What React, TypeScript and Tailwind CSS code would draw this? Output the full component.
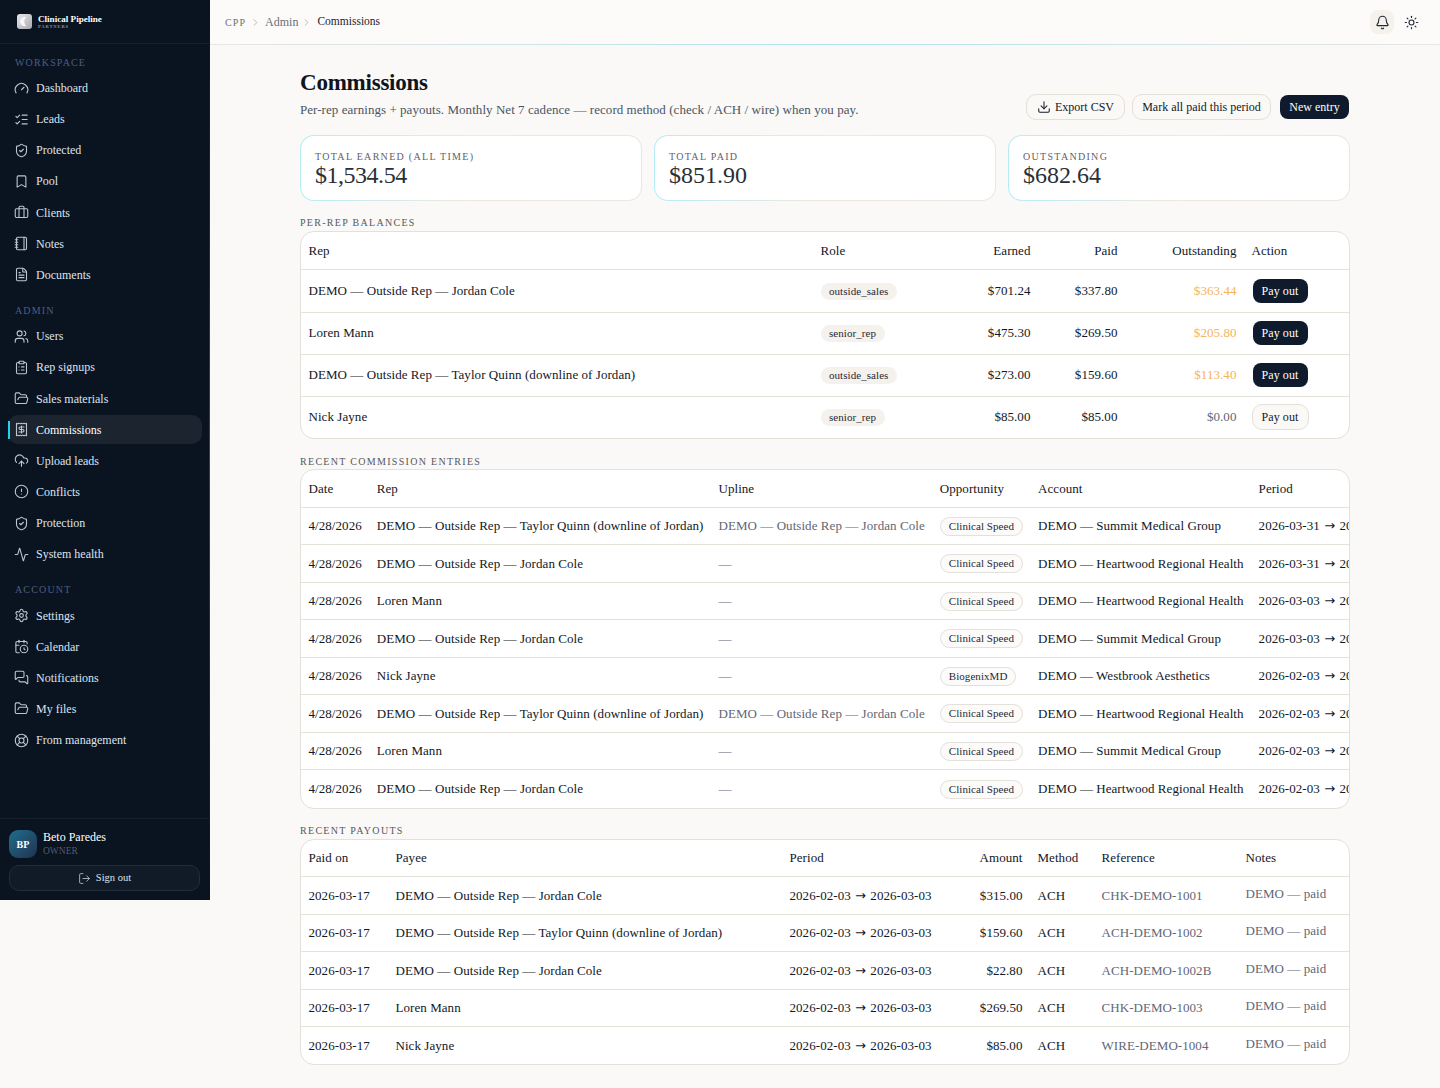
import type { ReactNode } from 'react'
import {
  Activity, Bell, Bookmark, Briefcase, CalendarClock, ChevronRight, CircleAlert, ClipboardList, CloudUpload,
  Download, FileText, FolderOpen, Gauge, LifeBuoy, ListChecks, LogOut, MessagesSquare, Notebook, Receipt,
  Settings, ShieldCheck, Sun, Users,
} from 'lucide-react'
import type { LucideIcon } from 'lucide-react'

type NavItem = { label: string; icon: LucideIcon; active?: boolean }

const workspace: NavItem[] = [
  { label: 'Dashboard', icon: Gauge },
  { label: 'Leads', icon: ListChecks },
  { label: 'Protected', icon: ShieldCheck },
  { label: 'Pool', icon: Bookmark },
  { label: 'Clients', icon: Briefcase },
  { label: 'Notes', icon: Notebook },
  { label: 'Documents', icon: FileText },
]
const admin: NavItem[] = [
  { label: 'Users', icon: Users },
  { label: 'Rep signups', icon: ClipboardList },
  { label: 'Sales materials', icon: FolderOpen },
  { label: 'Commissions', icon: Receipt, active: true },
  { label: 'Upload leads', icon: CloudUpload },
  { label: 'Conflicts', icon: CircleAlert },
  { label: 'Protection', icon: ShieldCheck },
  { label: 'System health', icon: Activity },
]
const account: NavItem[] = [
  { label: 'Settings', icon: Settings },
  { label: 'Calendar', icon: CalendarClock },
  { label: 'Notifications', icon: MessagesSquare },
  { label: 'My files', icon: FolderOpen },
  { label: 'From management', icon: LifeBuoy },
]

const jordan = 'DEMO — Outside Rep — Jordan Cole'
const taylor = 'DEMO — Outside Rep — Taylor Quinn (downline of Jordan)'

const balances = [
  { rep: jordan, role: 'outside_sales', earned: '$701.24', paid: '$337.80', out: '$363.44', due: true },
  { rep: 'Loren Mann', role: 'senior_rep', earned: '$475.30', paid: '$269.50', out: '$205.80', due: true },
  { rep: taylor, role: 'outside_sales', earned: '$273.00', paid: '$159.60', out: '$113.40', due: true },
  { rep: 'Nick Jayne', role: 'senior_rep', earned: '$85.00', paid: '$85.00', out: '$0.00', due: false },
]

const summit = 'DEMO — Summit Medical Group'
const heartwood = 'DEMO — Heartwood Regional Health'
const entries = [
  { rep: taylor, upline: jordan, opp: 'Clinical Speed', account: summit, from: '2026-03-31', to: '2026-04-30' },
  { rep: jordan, upline: '—', opp: 'Clinical Speed', account: heartwood, from: '2026-03-31', to: '2026-04-30' },
  { rep: 'Loren Mann', upline: '—', opp: 'Clinical Speed', account: heartwood, from: '2026-03-03', to: '2026-03-31' },
  { rep: jordan, upline: '—', opp: 'Clinical Speed', account: summit, from: '2026-03-03', to: '2026-03-31' },
  { rep: 'Nick Jayne', upline: '—', opp: 'BiogenixMD', account: 'DEMO — Westbrook Aesthetics', from: '2026-02-03', to: '2026-03-03' },
  { rep: taylor, upline: jordan, opp: 'Clinical Speed', account: heartwood, from: '2026-02-03', to: '2026-03-03' },
  { rep: 'Loren Mann', upline: '—', opp: 'Clinical Speed', account: summit, from: '2026-02-03', to: '2026-03-03' },
  { rep: jordan, upline: '—', opp: 'Clinical Speed', account: heartwood, from: '2026-02-03', to: '2026-03-03' },
]

const payouts = [
  { payee: jordan, amount: '$315.00', ref: 'CHK-DEMO-1001' },
  { payee: taylor, amount: '$159.60', ref: 'ACH-DEMO-1002' },
  { payee: jordan, amount: '$22.80', ref: 'ACH-DEMO-1002B' },
  { payee: 'Loren Mann', amount: '$269.50', ref: 'CHK-DEMO-1003' },
  { payee: 'Nick Jayne', amount: '$85.00', ref: 'WIRE-DEMO-1004' },
]

function NavGroup({ title, items }: { title: string; items: NavItem[] }) {
  return (
    <div className="mb-[12.35px]">
      <div className="px-[15px] mb-[2px] h-[18px] leading-[18px] text-[10px] tracking-[1.15px] text-[#4a5f80]">{title}</div>
      {items.map(item => {
        const Icon = item.icon
        return (
          <div
            key={item.label}
            className={`relative flex items-center gap-[7px] h-[29px] mb-[2.15px] ml-[8px] mr-[8px] pl-[6px] rounded-[10px] text-[12px] ${
              item.active ? 'bg-[#1c2430] text-white' : 'text-[#dbe4f0]'
            }`}
          >
            {item.active && <span className="absolute left-0 top-[6px] bottom-[5px] w-[2px] bg-[#22d3ee]" />}
            <Icon className="w-[15px] h-[15px] shrink-0 text-[#bcc6d2]" strokeWidth={1.75} />
            <span>{item.label}</span>
          </div>
        )
      })}
    </div>
  )
}

function Sidebar() {
  return (
    <aside className="relative w-[210px] h-[900px] shrink-0 flex flex-col bg-[#0a1320]">
      <span className="absolute right-0 inset-y-0 w-px bg-gradient-to-b from-[#0a1320] via-[#0f5266] to-[#0a1320]" />
      <div className="h-[44px] shrink-0 flex items-center gap-[6px] pl-[17px] border-b border-[#161f2c]">
        <div className="w-[15px] h-[15px] rounded-[3px] bg-gradient-to-br from-[#e9e9eb] to-[#a9abb0] flex items-center justify-center">
          <svg viewBox="0 0 15 15" className="w-[15px] h-[15px]">
            <path d="M9.2 3.2a4.6 4.6 0 1 0 0 8.6 5.6 5.6 0 0 1 0-8.6z" fill="#f7f7f8" />
          </svg>
        </div>
        <div className="-mt-[1px]">
          <div className="text-[9.1px] leading-[10px] font-bold text-white">Clinical Pipeline</div>
          <div className="text-[4.5px] leading-[5px] tracking-[0.2em] font-bold text-[#8b95a5]">PARTNERS</div>
        </div>
      </div>
      <nav className="flex-1 pt-[9.55px]">
        <NavGroup title="WORKSPACE" items={workspace} />
        <NavGroup title="ADMIN" items={admin} />
        <NavGroup title="ACCOUNT" items={account} />
      </nav>
      <div className="h-[82px] shrink-0 border-t border-[#161f2c] px-[9px] pt-[11px]">
        <div className="flex items-center gap-[6px] h-[28px]">
          <div className="w-[28px] h-[28px] rounded-[9px] bg-gradient-to-br from-[#1c6f8c] to-[#1e3350] flex items-center justify-center text-[10px] font-bold text-white">
            BP
          </div>
          <div>
            <div className="text-[12px] leading-[15px] text-white">Beto Paredes</div>
            <div className="text-[9.5px] leading-[13px] text-[#4f5c70]">OWNER</div>
          </div>
        </div>
        <div className="mt-[7px] h-[26px] w-[191px] rounded-[10px] border border-[#232c3a] bg-[#111a27] flex items-center justify-center gap-[5px] text-[10.5px] text-[#dbe4f0]">
          <LogOut className="w-[13px] h-[13px] text-[#a8b2c0]" strokeWidth={1.75} />
          Sign out
        </div>
      </div>
    </aside>
  )
}

function TopBar() {
  return (
    <header className="bg-[#fcfbf9]">
      <div className="h-[44px] flex items-center justify-between pl-[15px] pr-[17px]">
        <div className="flex items-center text-[12px]">
          <span className="text-[10px] tracking-[1.1px] text-[#6d6f75]">CPP</span>
          <ChevronRight className="w-[11px] h-[11px] mx-[4px] text-[#b5b5b5]" />
          <span className="text-[#6d6f75]">Admin</span>
          <ChevronRight className="w-[11px] h-[11px] mx-[3px] text-[#b5b5b5]" />
          <span className="ml-[2px] text-[11.5px] text-[#1d2430]">Commissions</span>
        </div>
        <div className="flex items-center gap-[5px]">
          <div className="w-[24px] h-[24px] rounded-[8px] bg-[#f5f1eb] flex items-center justify-center">
            <Bell className="w-[15px] h-[15px] text-[#1f2937]" strokeWidth={1.75} />
          </div>
          <div className="w-[24px] h-[24px] flex items-center justify-center">
            <Sun className="w-[15px] h-[15px] text-[#1f2937]" strokeWidth={1.75} />
          </div>
        </div>
      </div>
      <div className="h-px bg-gradient-to-r from-[#e8e6e1] via-[#aee4ee] to-[#e8e6e1]" />
    </header>
  )
}

function StatCard({ label, value, tight }: { label: string; value: string; tight?: boolean }) {
  return (
    <div className="h-[66px] rounded-[14px] p-px bg-gradient-to-r from-[#b5ecf5] via-[#f0e8dc] to-[#e7e7e7]">
      <div className="h-full rounded-[13px] bg-white px-[14px] pt-[15px]">
        <div className="text-[10px] leading-[12px] tracking-[1.3px] text-[#5f6268]">{label}</div>
        <div className={`text-[24px] leading-[24px] text-[#2b2f36] ${tight ? 'tracking-[-0.02em]' : ''}`}>{value}</div>
      </div>
    </div>
  )
}

function SectionLabel({ children }: { children: ReactNode }) {
  return <div className="h-[14px] leading-[14px] text-[10px] tracking-[1.3px] text-[#55585e]">{children}</div>
}

function TableCard({ children }: { children: ReactNode }) {
  return <div className="rounded-[14px] border border-[#e4e0da] bg-white overflow-hidden">{children}</div>
}

function Th({ children, right }: { children: ReactNode; right?: boolean }) {
  return <th className={`px-[7.5px] h-[37px] font-normal ${right ? 'text-right' : 'text-left'}`}>{children}</th>
}

function Pill({ children }: { children: ReactNode }) {
  return <span className="inline-block h-[17px] leading-[17px] px-[8.5px] rounded-full bg-[#f5f2ed] text-[11px] text-[#1f2937]">{children}</span>
}

function OutlinePill({ children }: { children: ReactNode }) {
  return (
    <span className="inline-block h-[19px] leading-[17px] px-[8px] rounded-full border border-[#e4e0da] bg-[#fcfbf9] text-[11px] text-[#1f2937]">
      {children}
    </span>
  )
}

function Period({ from, to }: { from: string; to: string }) {
  return (
    <>
      {from} <span className="mx-[1px] font-['DejaVu_Sans',sans-serif]">→</span> {to}
    </>
  )
}

export default function App() {
  return (
    <div className="min-h-[1088px] flex items-start bg-[#faf9f7] font-['Liberation_Serif',serif] text-[#111827]">
      <Sidebar />
      <div className="flex-1 min-w-0">
        <TopBar />
        <main className="w-[1050px] ml-[90px] pt-[25px]">
          <h1 className="text-[23px] leading-[26px] tracking-[-0.01em] font-bold text-[#0f1420]">Commissions</h1>
          <div className="flex items-end justify-between mt-[5px] mb-[15px]">
            <p className="text-[13px] leading-[18px] pb-[1px] tracking-[0.05px] text-[#4b5563]">
              Per-rep earnings + payouts. Monthly Net 7 cadence — record method (check / ACH / wire) when you pay.
            </p>
            <div className="flex items-center text-[12px] -mt-[10px] mr-[1px]">
              <button className="h-[26px] w-[99px] justify-center rounded-[10px] border border-[#e4dfd8] bg-[#fbf9f6] flex items-center gap-[4px]">
                <Download className="w-[14px] h-[14px]" strokeWidth={1.75} />
                Export CSV
              </button>
              <button className="ml-[7px] h-[26px] w-[139px] rounded-[10px] border border-[#e4dfd8] bg-[#fbf9f6]">Mark all paid this period</button>
              <button className="ml-[9px] h-[24px] w-[69px] rounded-[8px] bg-[#0f1b2d] text-white">New entry</button>
            </div>
          </div>

          <div className="grid grid-cols-3 gap-[12px] mb-[15px]">
            <StatCard label="TOTAL EARNED (ALL TIME)" value="$1,534.54" tight />
            <StatCard label="TOTAL PAID" value="$851.90" />
            <StatCard label="OUTSTANDING" value="$682.64" />
          </div>

          <div className="mb-[1px]">
            <SectionLabel>PER-REP BALANCES</SectionLabel>
          </div>
          <TableCard>
            <table className="w-full border-collapse text-[13px] tracking-[0.06px] whitespace-nowrap">
              <thead>
                <tr className="border-b border-[#e4e0da]">
                  <Th>Rep</Th>
                  <Th>Role</Th>
                  <Th right>Earned</Th>
                  <Th right>Paid</Th>
                  <Th right>Outstanding</Th>
                  <Th>Action</Th>
                </tr>
              </thead>
              <tbody>
                {balances.map((b, i) => (
                  <tr key={i} className={`${i === 0 ? 'h-[43px]' : i === 3 ? 'h-[41.5px]' : 'h-[42px]'} ${i < balances.length - 1 ? 'border-b border-[#e4e0da]' : ''}`}>
                    <td className="px-[7.5px] w-[512px]">{b.rep}</td>
                    <td className="px-[7.5px] w-[120px]"><Pill>{b.role}</Pill></td>
                    <td className="px-[7.5px] text-right">{b.earned}</td>
                    <td className="px-[7.5px] text-right w-[87px]">{b.paid}</td>
                    <td className={`px-[7.5px] text-right w-[119px] ${b.due ? 'text-[#f5b25c]' : 'text-[#5f6775]'}`}>{b.out}</td>
                    <td className="px-[7.5px] w-[105px] text-[12px]">
                      {b.due ? (
                        <button className="block ml-[1px] h-[24px] w-[55px] rounded-[8px] bg-[#0f1b2d] text-white">Pay out</button>
                      ) : (
                        <button className="block h-[26px] w-[57px] rounded-[10px] border border-[#e4dfd8] bg-[#fbf9f6]">Pay out</button>
                      )}
                    </td>
                  </tr>
                ))}
              </tbody>
            </table>
          </TableCard>

          <div className="mt-[16px] mb-[0.5px]">
            <SectionLabel>RECENT COMMISSION ENTRIES</SectionLabel>
          </div>
          <TableCard>
            <table className="border-collapse text-[13px] tracking-[0.06px] whitespace-nowrap">
              <thead>
                <tr className="border-b border-[#e4e0da]">
                  <Th>Date</Th>
                  <Th>Rep</Th>
                  <Th>Upline</Th>
                  <Th>Opportunity</Th>
                  <Th>Account</Th>
                  <Th>Period</Th>
                </tr>
              </thead>
              <tbody>
                {entries.map((e, i) => (
                  <tr key={i} className={`${i === entries.length - 1 ? 'h-[38px]' : 'h-[37.5px] border-b border-[#e4e0da]'}`}>
                    <td className="px-[7.5px]">4/28/2026</td>
                    <td className="px-[7.5px]">{e.rep}</td>
                    <td className="px-[7.5px] text-[#5f6775]">{e.upline}</td>
                    <td className="px-[7.5px]"><OutlinePill>{e.opp}</OutlinePill></td>
                    <td className="px-[7.5px]">{e.account}</td>
                    <td className="px-[7.5px]"><Period from={e.from} to={e.to} /></td>
                  </tr>
                ))}
              </tbody>
            </table>
          </TableCard>

          <div className="mt-[15px] mb-[1px]">
            <SectionLabel>RECENT PAYOUTS</SectionLabel>
          </div>
          <TableCard>
            <table className="w-full border-collapse text-[13px] tracking-[0.06px] whitespace-nowrap">
              <thead>
                <tr className="border-b border-[#e4e0da]">
                  <Th>Paid on</Th>
                  <Th>Payee</Th>
                  <Th>Period</Th>
                  <Th right>Amount</Th>
                  <Th>Method</Th>
                  <Th>Reference</Th>
                  <Th>Notes</Th>
                </tr>
              </thead>
              <tbody>
                {payouts.map((p, i) => (
                  <tr key={i} className={`h-[37.5px] ${i < payouts.length - 1 ? 'border-b border-[#e4e0da]' : ''}`}>
                    <td className="px-[7.5px] w-[87px]">2026-03-17</td>
                    <td className="px-[7.5px] w-[394px]">{p.payee}</td>
                    <td className="px-[7.5px]"><Period from="2026-02-03" to="2026-03-03" /></td>
                    <td className="px-[7.5px] text-right">{p.amount}</td>
                    <td className="px-[7.5px] w-[64px]">ACH</td>
                    <td className="px-[7.5px] w-[144px] text-[#5f6775]">{p.ref}</td>
                    <td className="px-[7.5px] pb-[4px] w-[111px] text-[#5f6775]">DEMO — paid</td>
                  </tr>
                ))}
              </tbody>
            </table>
          </TableCard>
        </main>
      </div>
    </div>
  )
}
